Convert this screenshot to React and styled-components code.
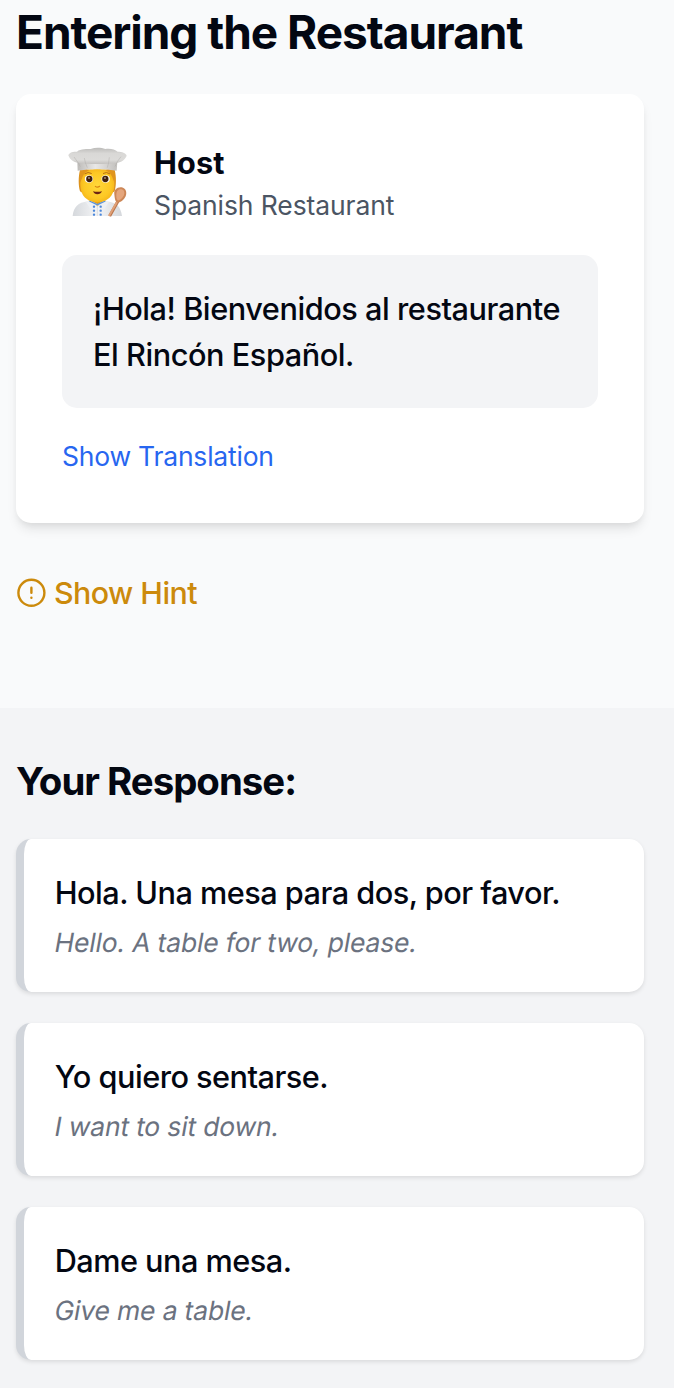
import React, {useState} from 'react';
import styled, {createGlobalStyle} from 'styled-components';

const GlobalStyle = createGlobalStyle`
  * {
    box-sizing: border-box;
  }
  body {
    margin: 0;
    color: #030712;
    background-color: #f9fafb;
    font-family: Inter, 'Liberation Sans', sans-serif;
    -webkit-font-smoothing: antialiased;
  }
  h1, h2, h3, p {
    margin: 0;
  }
  button {
    padding: 0;
    border: none;
    background: none;
    font: inherit;
    text-align: left;
    cursor: pointer;
  }
`;
const Page = styled.div`
  display: flex;
  flex-direction: column;
  height: 1388px;
  overflow: hidden;
`;
const Scene = styled.main`
  height: 708px;
  padding: 1px 30px 0 16px;
`;
const Title = styled.h1`
  margin-bottom: 31px;
  font-size: 46px;
  font-weight: 700;
  line-height: 62px;
  letter-spacing: -1.03px;
  white-space: nowrap;
`;
const DialogCard = styled.section`
  height: 429px;
  padding: 46px;
  border-radius: 15px;
  background-color: #fff;
  box-shadow: 0 8px 12px -2px rgba(0, 0, 0, 0.09),
    0 4px 8px -4px rgba(0, 0, 0, 0.09);
`;
const Speaker = styled.header`
  display: flex;
  align-items: center;
  height: 84px;
  margin-bottom: 31px;
  svg {
    flex: none;
    margin: 0 24px 0 4px;
  }
`;
const SpeakerName = styled.h3`
  font-size: 30.7px;
  font-weight: 650;
  line-height: 46px;
  letter-spacing: 0.1px;
`;
const SpeakerPlace = styled.p`
  color: #4b5563;
  font-size: 26.5px;
  font-weight: 430;
  line-height: 38px;
  letter-spacing: -0.1px;
`;
const Bubble = styled.div`
  height: 153px;
  margin-bottom: 29px;
  padding: 31px;
  border-radius: 15px;
  background-color: #f3f4f6;
  font-size: 30.7px;
  font-weight: 500;
  line-height: 46px;
  letter-spacing: -0.46px;
  white-space: nowrap;
`;
const TranslationButton = styled.button`
  display: block;
  color: #2766f0;
  font-size: 26.5px;
  font-weight: 440;
  line-height: 38px;
  letter-spacing: -0.22px;
`;
const HintButton = styled.button`
  display: flex;
  align-items: center;
  gap: 8px;
  margin-top: 47px;
  color: #cc8a0c;
  font-size: 30.4px;
  font-weight: 450;
  line-height: 46px;
  letter-spacing: -0.55px;
`;
const Responses = styled.section`
  flex: 1;
  padding: 46px 30px 0 16px;
  background-color: #f3f4f6;
`;
const ResponsesTitle = styled.h2`
  margin-bottom: 31px;
  font-size: 38.4px;
  font-weight: 700;
  line-height: 54px;
  letter-spacing: -1px;
`;
const ResponseList = styled.div`
  display: flex;
  flex-direction: column;
  gap: 31px;
`;
const ResponseCard = styled.button`
  height: 153px;
  padding: 31px 31px 31px 30.7px;
  border-left: 8px solid ${({selected}) => (selected ? '#2563eb' : '#d1d5db')};
  border-radius: 15px;
  background-color: #fff;
  box-shadow: 0 2px 4px rgba(0, 0, 0, 0.1);
  white-space: nowrap;
`;
const ResponseText = styled.p`
  margin-bottom: 7px;
  color: #030712;
  font-size: 30.7px;
  font-weight: 500;
  line-height: 46px;
  letter-spacing: -0.52px;
`;
// slanted upright face, so the "a" keeps its double-storey shape
const ResponseTranslation = styled.p`
  color: #6b7280;
  font-size: 26.5px;
  font-weight: 440;
  line-height: 38px;
  letter-spacing: -0.18px;
  transform: skewX(-10deg);
`;

const responses = [
  {
    text: 'Hola. Una mesa para dos, por favor.',
    translation: 'Hello. A table for two, please.',
  },
  {text: 'Yo quiero sentarse.', translation: 'I want to sit down.'},
  {text: 'Dame una mesa.', translation: 'Give me a table.'},
];

function ChefIcon() {
  return (
    <svg width="64" height="72" viewBox="33 33 192 216">
      <defs>
        <linearGradient id="hat" x1="0" y1="0" x2="0" y2="1">
          <stop offset="0" stopColor="#bdbcba" />
          <stop offset="0.35" stopColor="#d9d8d6" />
          <stop offset="0.75" stopColor="#dcdbd9" />
          <stop offset="1" stopColor="#c4c2bf" />
        </linearGradient>
        <linearGradient id="band" x1="0" y1="0" x2="1" y2="0">
          <stop offset="0" stopColor="#bdbbb8" />
          <stop offset="0.45" stopColor="#e8e7e6" />
          <stop offset="1" stopColor="#c2c0bd" />
        </linearGradient>
        <linearGradient id="coat" x1="0" y1="0" x2="1" y2="0">
          <stop offset="0" stopColor="#d5d8dc" />
          <stop offset="0.5" stopColor="#f4f5f7" />
          <stop offset="1" stopColor="#d5d8dc" />
        </linearGradient>
        <radialGradient id="face" cx="0.5" cy="0.5" r="0.6">
          <stop offset="0" stopColor="#ffd83a" />
          <stop offset="0.65" stopColor="#fdc824" />
          <stop offset="1" stopColor="#f2ad16" />
        </radialGradient>
      </defs>
      <path
        d="M53 243C56 216 69 203 98 199L127 204L156 199C187 203 197 217 201 243Z"
        fill="url(#coat)"
      />
      <path d="M103 184H151V202L128 214L103 202Z" fill="#eaa214" />
      <path
        d="M103 195L93 201L106 222L127 210L148 222L161 202L151 195L128 208Z"
        fill="#eef0f3"
      />
      <path
        d="M103 198L127 209L151 198"
        fill="none"
        stroke="#5a91d6"
        strokeWidth="4"
      />
      <path d="M127 211V243" stroke="#cdd1d8" strokeWidth="2" />
      <g fill="#4c88db">
        <circle cx="117" cy="215" r="3.5" />
        <circle cx="137" cy="215" r="3.5" />
        <circle cx="117" cy="227" r="3.5" />
        <circle cx="137" cy="227" r="3.5" />
        <circle cx="117" cy="239" r="3.5" />
        <circle cx="137" cy="239" r="3.5" />
      </g>
      <path
        d="M75 105C70 125 70 151 75 169C81 176 92 170 96 164V103ZM179 105C184 125 184 151 179 169C173 176 162 170 158 164V103Z"
        fill="#dc921d"
      />
      <path
        d="M79 109C99 100 154 100 175 109C179 130 179 150 176 165C170 190 152 201 127 201C102 201 84 190 78 165C75 150 75 130 79 109Z"
        fill="url(#face)"
      />
      <path
        d="M75 108C79 102 96 101 103 105C92 111 86 116 82 127Q78 138 75 144ZM179 108C173 102 157 101 151 105C162 111 168 116 172 127Q176 138 179 144Z"
        fill="#e0951d"
      />
      <g fill="#fff">
        <ellipse cx="102" cy="132" rx="12.5" ry="11" />
        <ellipse cx="152" cy="132" rx="12.5" ry="11" />
      </g>
      <g fill="#40200b">
        <circle cx="103" cy="132" r="9.5" />
        <circle cx="151" cy="132" r="9.5" />
      </g>
      <g fill="#fff">
        <circle cx="102" cy="129" r="2" />
        <circle cx="150" cy="129" r="2" />
      </g>
      <path
        d="M90 116Q99 109 109 115M145 115Q154 109 164 116"
        fill="none"
        stroke="#b87015"
        strokeWidth="3"
        strokeLinecap="round"
      />
      <path
        d="M121 154Q127 159 134 154"
        fill="none"
        stroke="#d78610"
        strokeWidth="3.5"
        strokeLinecap="round"
      />
      <path d="M114 169Q127 172 141 169Q137 178 127 178Q118 178 114 169Z" fill="#6d2413" />
      <path
        d="M67 80Q127 90 187 80L185 107Q127 99 68 107Z"
        fill="url(#band)"
      />
      <path
        d="M40 61C43 51 56 50 66 50C77 40 98 43 107 42C121 37 139 38 151 42C166 40 180 43 188 50C200 50 213 54 215 62C210 75 198 81 187 83C153 88 101 88 67 83C54 80 45 75 40 61Z"
        fill="url(#hat)"
      />
      <path
        d="M57 66C63 75 70 82 76 95M88 69Q90 83 97 98M157 98Q162 82 163 67M180 95Q186 78 198 65"
        fill="none"
        stroke="#a9a7a4"
        strokeWidth="2.5"
        opacity="0.5"
      />
      <path
        d="M191 195L164 243"
        stroke="#b9744a"
        strokeWidth="9"
      />
      <path
        d="M189 196L162 243"
        stroke="#e0a077"
        strokeWidth="6"
      />
      <path
        d="M178 178C176 164 187 155 200 157C212 159 217 172 212 184C207 195 197 203 188 203C180 202 179 188 178 178Z"
        fill="#cd8757"
      />
      <path
        d="M184 179C184 167 191 162 200 163C209 166 210 175 205 184C200 193 193 197 188 196C184 192 184 187 184 179Z"
        fill="#e5a67d"
      />
    </svg>
  );
}

function HintIcon() {
  return (
    <svg
      width="30"
      height="30"
      viewBox="0 0 30 30"
      fill="none"
      stroke="currentColor"
      strokeWidth="2.4"
      strokeLinecap="round"
    >
      <circle cx="15.4" cy="14.8" r="13" />
      <path d="M15.4 9.7V14.8M15.4 19.6V19.7" />
    </svg>
  );
}

function App() {
  const [selectedIndex, setSelectedIndex] = useState(null);

  return (
    <Page>
      <GlobalStyle />
      <Scene>
        <Title>Entering the Restaurant</Title>
        <DialogCard>
          <Speaker>
            <ChefIcon />
            <div>
              <SpeakerName>Host</SpeakerName>
              <SpeakerPlace>Spanish Restaurant</SpeakerPlace>
            </div>
          </Speaker>
          <Bubble>
            ¡Hola! Bienvenidos al restaurante
            <br />
            El Rincón Español.
          </Bubble>
          <TranslationButton>Show Translation</TranslationButton>
        </DialogCard>
        <HintButton>
          <HintIcon />
          Show Hint
        </HintButton>
      </Scene>
      <Responses>
        <ResponsesTitle>Your Response:</ResponsesTitle>
        <ResponseList>
          {responses.map(({text, translation}, i) => (
            <ResponseCard
              key={text}
              selected={selectedIndex === i}
              onClick={() => setSelectedIndex(i)}
            >
              <ResponseText>{text}</ResponseText>
              <ResponseTranslation>{translation}</ResponseTranslation>
            </ResponseCard>
          ))}
        </ResponseList>
      </Responses>
    </Page>
  );
}
export default App;
